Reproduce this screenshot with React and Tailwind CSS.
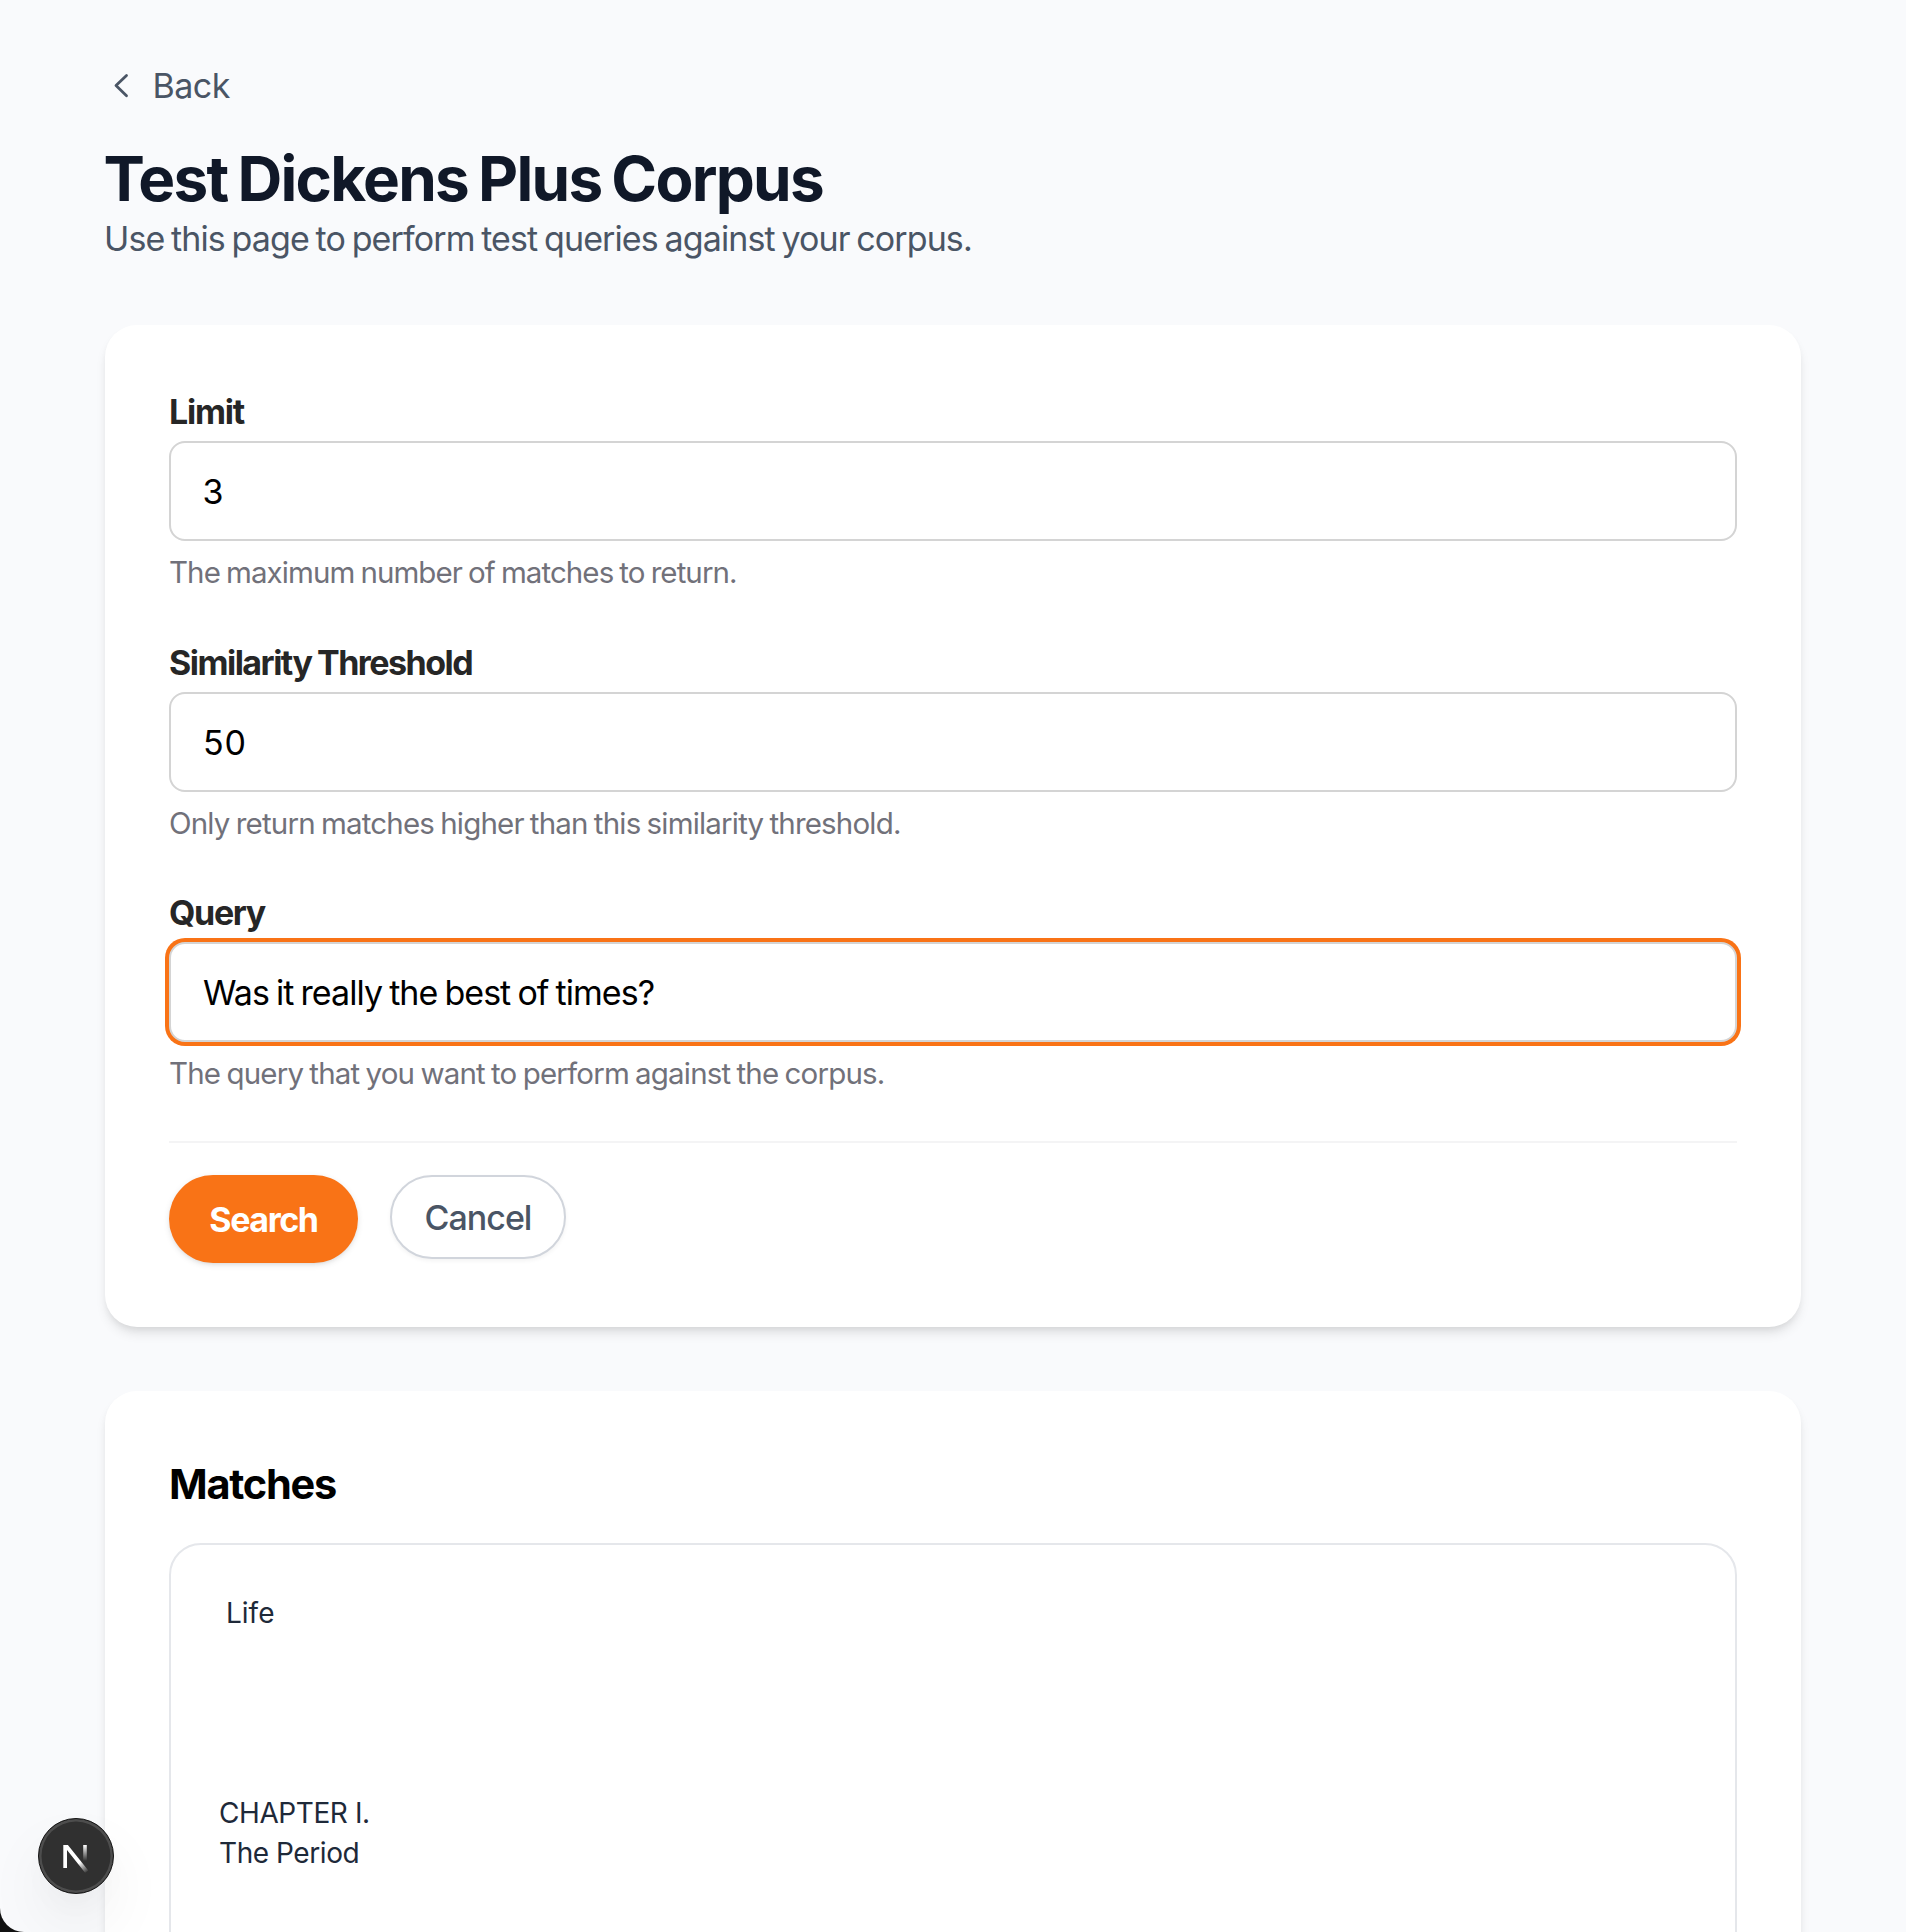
function Field({ label, labelClass, value, valueClass, hint, hintClass, focused }) {
  return (
    <div>
      <label className={`mb-[6px] block text-[34px] leading-[46px] font-bold text-neutral-800 ${labelClass}`}>
        {label}
      </label>
      <div
        className={`flex h-[100px] items-center rounded-[16px] border-2 border-[#d4d4d4] bg-white px-8 pt-[2px] text-[34px] leading-[48px] text-black ${
          focused ? "shadow-[0_0_0_4px_#f97316]" : ""
        }`}
      >
        <span className={valueClass}>{value}</span>
      </div>
      <p className={`mt-[11px] text-[29.5px] leading-[40px] text-[#71717a] [word-spacing:-1.3px] ${hintClass}`}>{hint}</p>
    </div>
  );
}

const cardClass =
  "rounded-[32px] bg-white shadow-[0_8px_12px_-2px_rgba(0,0,0,0.1),0_4px_8px_-4px_rgba(0,0,0,0.1)]";

function DevBadge() {
  return (
    <div className="absolute bottom-[38px] left-[38px] flex size-[76px] items-center justify-center rounded-full border border-[#171717] bg-[#303030] shadow-[inset_0_0_0_2.5px_#4d4d4d,0_32px_64px_rgba(0,0,0,0.06),0_16px_32px_-8px_rgba(0,0,0,0.03)]">
      <svg width="74" height="74" viewBox="0 0 74 74" fill="none">
        <defs>
          <linearGradient id="diag" x1="41" y1="43" x2="49" y2="53" gradientUnits="userSpaceOnUse">
            <stop stopColor="#fff" />
            <stop offset="1" stopColor="#fff" stopOpacity="0" />
          </linearGradient>
          <linearGradient id="stem" x1="46" y1="26" x2="46" y2="42" gradientUnits="userSpaceOnUse">
            <stop stopColor="#fff" />
            <stop offset="1" stopColor="#fff" stopOpacity="0" />
          </linearGradient>
        </defs>
        <path d="M24.3 26h4.6L49.3 51.5a32 32 0 0 1-3.2 2.2L28 31v17.9h-3.7z" fill="url(#diag)" />
        <path d="M44.2 26h3.6v17h-3.6z" fill="url(#stem)" />
      </svg>
    </div>
  );
}

export default function App() {
  return (
    <div className="h-[1932px] overflow-hidden bg-[#111111]">
      <div className="relative h-full overflow-hidden rounded-bl-[24px] bg-[#f9fafc] px-[105px] pt-[62px] font-['Inter','Liberation_Sans',sans-serif]">
        <a className="flex h-12 items-center text-[34px] leading-[48px] tracking-[-0.5px] text-gray-600">
          <svg width="32" height="32" viewBox="0 0 32 32" fill="none" className="mr-[15.5px] -mt-[1px]">
            <path d="M21.5 5.5 11 15.6l10.5 10.2" stroke="currentColor" strokeWidth="2.8" strokeLinecap="round" strokeLinejoin="round" />
          </svg>
          Back
        </a>
        <h1 className="mt-[33px] -ml-[1.5px] text-[62px] leading-[72px] font-bold tracking-[-1.74px] text-gray-900 [word-spacing:-3px]">
          Test Dickens Plus Corpus
        </h1>
        <p className="-ml-[1px] text-[34px] leading-[48px] tracking-[-0.89px] text-gray-600 [word-spacing:-2px]">
          Use this page to perform test queries against your corpus.
        </p>

        <section className={`mt-[62px] p-16 ${cardClass}`}>
          <div className="flex flex-col gap-[47.6px]">
            <Field
              label="Limit"
              labelClass="tracking-[-1.22px]"
              value="3"
              valueClass="-ml-[0.5px]"
              hint="The maximum number of matches to return."
              hintClass="tracking-[-0.92px]"
            />
            <Field
              label="Similarity Threshold"
              labelClass="tracking-[-1.52px] [word-spacing:-1px]"
              value="50"
              valueClass="tracking-[0.8px]"
              hint="Only return matches higher than this similarity threshold."
              hintClass="tracking-[-0.82px]"
            />
            <Field
              label="Query"
              labelClass="tracking-[-1.35px]"
              value="Was it really the best of times?"
              valueClass="tracking-[-0.96px] [word-spacing:-1.5px]"
              hint="The query that you want to perform against the corpus."
              hintClass="tracking-[-0.82px]"
              focused
            />
          </div>
          <div className="mt-12 flex items-start gap-8 border-t-2 border-[#f4f4f5] pt-8 text-[34px] leading-[48px]">
            <button className="h-[88px] w-[189px] rounded-full bg-[#f97316] pt-[2px] font-bold tracking-[-1.42px] text-white shadow-[0_2px_6px_rgba(0,0,0,0.1),0_2px_4px_-2px_rgba(0,0,0,0.1)]">
              Search
            </button>
            <button className="h-[84px] w-[176px] rounded-full border-2 border-gray-300 bg-white pt-[2px] font-medium tracking-[-1px] text-gray-600 shadow-[0_2px_4px_rgba(0,0,0,0.05)]">
              Cancel
            </button>
          </div>
        </section>

        <section className={`mt-16 h-[700px] p-16 ${cardClass}`}>
          <h2 className="text-[41.5px] leading-[58px] font-bold tracking-[-1.25px] text-black">Matches</h2>
          <div className="mt-[30px] h-[600px] rounded-[32px] border-2 border-gray-200 px-12 pt-12 text-[28px] leading-[40px] text-gray-800">
            <p className="h-[200px] pl-[7px]">Life</p>
            <p className="tracking-[-0.42px]">CHAPTER I.</p>
            <p className="tracking-[-0.44px]">The Period</p>
          </div>
        </section>

        <DevBadge />
      </div>
    </div>
  );
}
